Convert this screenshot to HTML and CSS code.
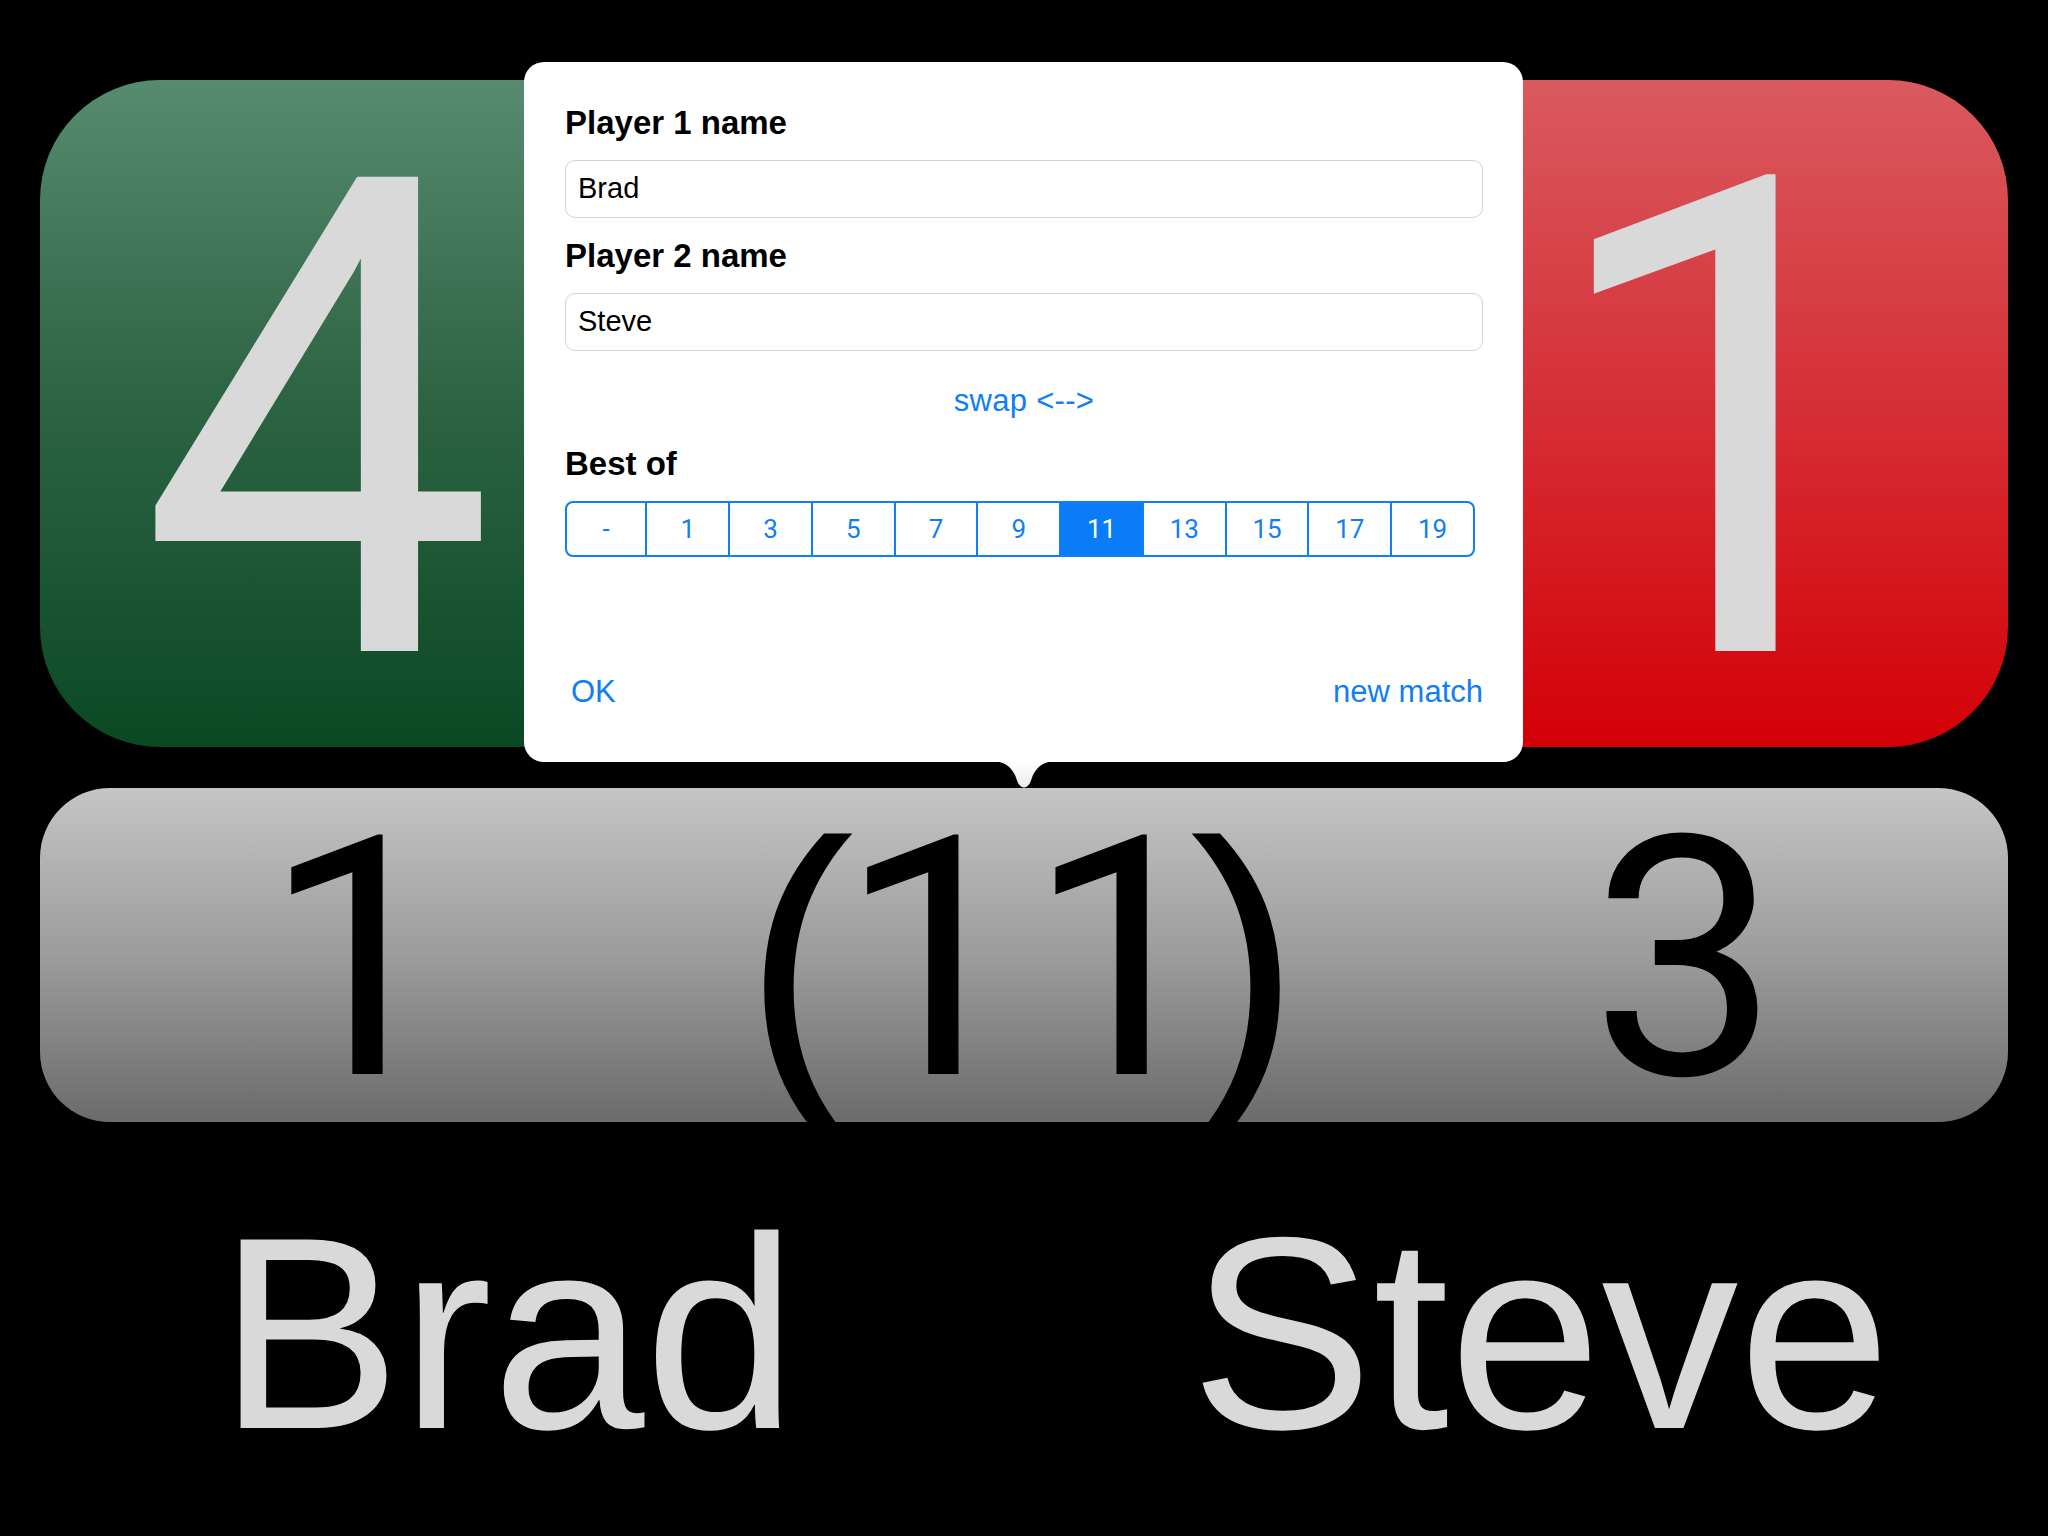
FILE: index.html
```html
<!DOCTYPE html>
<html lang="en">
<head>
<meta charset="utf-8">
<title>Scoreboard</title>
<link rel="stylesheet" href="styles.css">
</head>
<body>
<div class="screen">
  <div class="scores">
    <div class="card card-green"><span class="big big-four">4</span></div>
    <div class="card card-red"><span class="big">1</span></div>
  </div>

  <div class="bar">
    <div class="bar-col bar-left">1</div>
    <div class="bar-col bar-mid"><span class="paren paren-l">(</span>11<span class="paren paren-r">)</span></div>
    <div class="bar-col bar-right">3</div>
  </div>

  <div class="names">
    <div class="name">Brad</div>
    <div class="name">Steve</div>
  </div>

  <div class="popover">
    <div class="label">Player 1 name</div>
    <div class="field">Brad</div>
    <div class="label label-gap">Player 2 name</div>
    <div class="field">Steve</div>
    <div class="swap">swap &lt;--&gt;</div>
    <div class="label best">Best of</div>
    <div class="segmented">
      <div class="seg seg-first">-</div>
      <div class="seg">1</div>
      <div class="seg">3</div>
      <div class="seg">5</div>
      <div class="seg">7</div>
      <div class="seg">9</div>
      <div class="seg seg-on">11</div>
      <div class="seg">13</div>
      <div class="seg">15</div>
      <div class="seg">17</div>
      <div class="seg">19</div>
    </div>
    <div class="footer">
      <span class="link ok">OK</span>
      <span class="link">new match</span>
    </div>
    <svg class="arrow" width="70" height="28" viewBox="0 0 70 28">
      <defs>
        <linearGradient id="ag" x1="0" y1="0" x2="0" y2="1">
          <stop offset="0" stop-color="#ffffff"/>
          <stop offset="1" stop-color="#ececec"/>
        </linearGradient>
      </defs>
      <path d="M0 0 C16 0 21 5 26 14 L29 22 Q35 31 41 22 L44 14 C49 5 54 0 70 0 Z" fill="url(#ag)"/>
    </svg>
  </div>
</div>
</body>
</html>
```

FILE: styles.css
```css
html, body {
  margin: 0;
  padding: 0;
  background: #000;
}
body {
  width: 2048px;
  height: 1536px;
  overflow: hidden;
  font-family: "Liberation Sans", Arial, Helvetica, sans-serif;
}
.screen {
  position: relative;
  width: 2048px;
  height: 1536px;
  box-sizing: border-box;
  padding: 80px 40px 0 40px;
}

/* top score cards */
.scores {
  display: flex;
  gap: 28px;
  height: 667px;
}
.card {
  flex: 1;
  display: flex;
  align-items: flex-start;
  border-radius: 120px;
  padding-top: 10px;
  box-sizing: border-box;
  overflow: hidden;
}
.card-green {
  background: linear-gradient(to bottom, #578b70 0%, #2f6645 45%, #0a4824 100%);
  padding-left: 99px;
}
.card-red {
  background: linear-gradient(to bottom, #d95a5f 0%, #d6373e 40%, #d30006 100%);
  justify-content: flex-end;
  padding-right: 95px;
}
.big {
  font-family: Roboto, "Liberation Sans", sans-serif;
  font-size: 667px;
  line-height: 1;
  color: #d9d9d9;
}
.big-four {
  display: inline-block;
  transform: scaleX(0.95);
  transform-origin: left center;
}

/* gray games bar */
.bar {
  margin-top: 41px;
  height: 334px;
  border-radius: 70px;
  background: linear-gradient(to bottom, #c5c5c5 0%, #9c9c9c 50%, #6b6b6b 100%);
  overflow: hidden;
  display: grid;
  grid-template-columns: 635px 740px 1fr;
}
.bar-col {
  font-family: Roboto, "Liberation Sans", sans-serif;
  font-size: 335px;
  line-height: 1;
  color: #000;
  text-align: center;
  padding-top: 4px;
  white-space: nowrap;
}
.bar-mid {
  padding-right: 46px;
}
.bar-right {
  padding-right: 53px;
}
.paren {
  font-family: "Liberation Sans", Arial, sans-serif;
  font-size: 332px;
}
.paren-l {
  margin-right: -15px;
}
.paren-r {
  margin-left: -26px;
}

/* player names */
.names {
  margin-top: 74px;
  display: grid;
  grid-template-columns: 1fr 1fr;
  gap: 98px;
}
.name {
  font-size: 274px;
  line-height: 1;
  color: #d9d9d9;
  text-align: center;
  white-space: nowrap;
}

/* popover */
.popover {
  position: absolute;
  left: 524px;
  top: 62px;
  width: 999px;
  height: 700px;
  box-sizing: border-box;
  padding: 41px 40px 0 41px;
  background: #fff;
  border-radius: 20px;
}
.label {
  font-size: 33px;
  font-weight: bold;
  line-height: 40px;
  color: #000;
}
.label-gap {
  margin-top: 18px;
}
.field {
  margin-top: 17px;
  height: 58px;
  box-sizing: border-box;
  border: 1.5px solid #d2d2d2;
  border-radius: 10px;
  padding-left: 12px;
  font-size: 29px;
  line-height: 55px;
  color: #000;
}
.swap {
  margin-top: 30px;
  text-align: center;
  font-size: 31px;
  line-height: 40px;
  color: #117ef6;
  letter-spacing: 0.3px;
}
.best {
  margin-top: 23px;
}
.segmented {
  margin-top: 17px;
  width: 910px;
  height: 56px;
  box-sizing: border-box;
  display: flex;
  border: 2px solid #117ef6;
  border-radius: 8px;
  overflow: hidden;
}
.seg {
  flex: 1;
  display: flex;
  align-items: center;
  justify-content: center;
  font-family: Roboto, "Liberation Sans", sans-serif;
  font-size: 26px;
  color: #117ef6;
  border-left: 2px solid #117ef6;
}
.seg-first {
  border-left: none;
  flex: 0.97;
}
.seg-on {
  background: #0a7cf8;
  color: #fff;
}
.footer {
  margin-top: 115px;
  display: flex;
  justify-content: space-between;
  padding-left: 6px;
  font-size: 31px;
  line-height: 40px;
}
.link {
  color: #117ef6;
}
.arrow {
  position: absolute;
  left: 465px;
  top: 699px;
  display: block;
}
```
